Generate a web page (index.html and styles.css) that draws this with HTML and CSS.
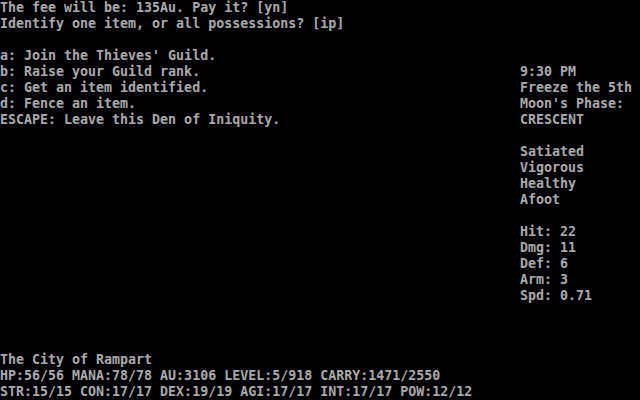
FILE: index.html
```html
<!DOCTYPE html>
<html lang="en">
<head>
    <meta charset="UTF-8">
    <meta name="viewport" content="width=device-width, initial-scale=1.0">
    <title>Omega - Thieves' Guild</title>
    <link rel="stylesheet" href="styles.css">
</head>
<body>
    <div class="screen">
        <div class="messages">
            <div class="line">The fee will be: 135Au. Pay it? [yn]</div>
            <div class="line">Identify one item, or all possessions? [ip]</div>
        </div>
        <div class="main">
            <div class="menu">
                <div class="line"></div>
                <div class="line">a: Join the Thieves' Guild.</div>
                <div class="line">b: Raise your Guild rank.</div>
                <div class="line">c: Get an item identified.</div>
                <div class="line">d: Fence an item.</div>
                <div class="line">ESCAPE: Leave this Den of Iniquity.</div>
            </div>
            <div class="side">
                <div class="block">
                    <div class="line">9:30 PM</div>
                    <div class="line">Freeze the 5th</div>
                    <div class="line">Moon's Phase:</div>
                    <div class="line">CRESCENT</div>
                </div>
                <div class="block">
                    <div class="line">Satiated</div>
                    <div class="line">Vigorous</div>
                    <div class="line">Healthy</div>
                    <div class="line">Afoot</div>
                </div>
                <div class="block">
                    <div class="line">Hit: 22</div>
                    <div class="line">Dmg: 11</div>
                    <div class="line">Def: 6</div>
                    <div class="line">Arm: 3</div>
                    <div class="line">Spd: 0.71</div>
                </div>
            </div>
        </div>
        <div class="status">
            <div class="line">The City of Rampart</div>
            <div class="line">HP:56/56 MANA:78/78 AU:3106 LEVEL:5/918 CARRY:1471/2550</div>
            <div class="line">STR:15/15 CON:17/17 DEX:19/19 AGI:17/17 INT:17/17 POW:12/12</div>
        </div>
    </div>
</body>
</html>
```

FILE: styles.css
```css
body {
    margin: 0;
    background-color: #000;
}
.screen {
    display: flex;
    flex-direction: column;
    width: 640px;
    height: 400px;
    overflow: hidden;
    background-color: #000;
    color: #aaaaaa;
    font-family: "DejaVu Sans Mono", "Liberation Mono", monospace;
    font-size: 13.3px;
    font-weight: bold;
    line-height: 16px;
}
.line {
    height: 16px;
    white-space: pre;
}
.main {
    display: flex;
    height: 320px;
}
.menu {
    width: 520px;
}
.side {
    display: flex;
    flex-direction: column;
    gap: 16px;
    padding-top: 32px;
}
```
